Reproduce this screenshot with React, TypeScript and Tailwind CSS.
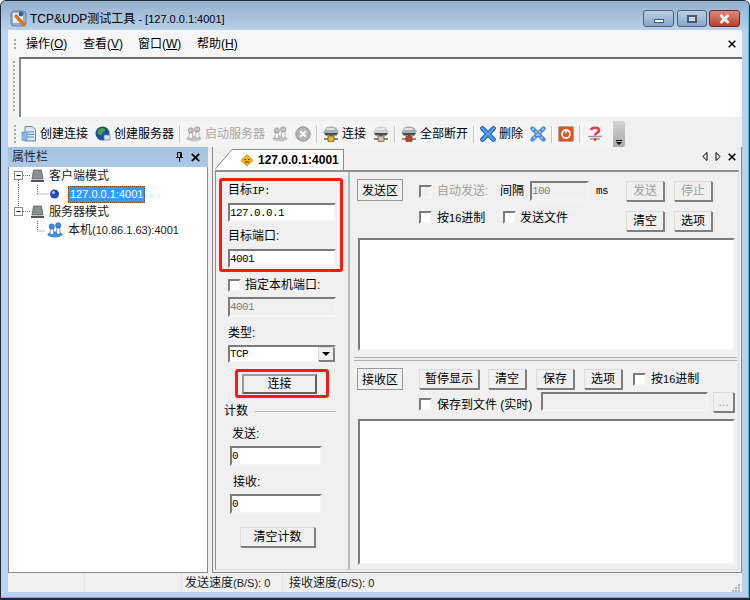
const MONO = "[font-family:'Liberation_Mono','Noto_Sans_CJK_SC',monospace] text-[11px] tracking-[-0.6px]";
const SUNKEN = "border-2 border-t-[#7b7b7b] border-l-[#7b7b7b] border-r-[#f4f4f4] border-b-[#f4f4f4]";
const BEVEL = "border border-t-[#dcdcdc] border-l-[#dcdcdc] border-r-[#7f7f7f] border-b-[#7f7f7f] shadow-[1px_1px_0_#7f7f7f]";

const Grip = ({ rows }: { rows: number }) => (
  <div className="flex w-[3px] shrink-0 flex-col gap-[2px]">
    {Array.from({ length: rows }).map((_, i) => (
      <div key={i} className="h-[2px] w-[2px] bg-[#a8a8a8]" />
    ))}
  </div>
);

const Check = ({ disabled }: { disabled?: boolean }) => (
  <div className={`h-[13px] w-[13px] shrink-0 ${SUNKEN} ${disabled ? "bg-[#f0f0f0]" : "bg-white"}`} />
);

const Btn = ({ label, w, disabled }: { label: string; w: string; disabled?: boolean }) => (
  <div
    className={`flex h-[20px] shrink-0 items-center justify-center ${w} ${BEVEL} ${
      disabled ? "text-[#a0a0a0]" : "text-black"
    }`}
  >
    {label}
  </div>
);

const Field = ({ value, w, h = "h-[20px]", disabled }: { value?: string; w: string; h?: string; disabled?: boolean }) => (
  <div
    className={`flex items-center overflow-hidden ${MONO} ${w} ${h} ${SUNKEN} ${
      disabled ? "bg-[#f0f0f0] text-[#808080]" : "bg-white text-black"
    }`}
  >
    {value}
  </div>
);

const Sep = () => <div className="mx-[5px] h-[17px] w-[2px] shrink-0 border-l border-r border-l-[#c4c4c4] border-r-white" />;

const Users = ({ color = "#3f8fe0", dark = "#1c5fb0" }: { color?: string; dark?: string }) => (
  <svg width="16" height="16" viewBox="0 0 16 16" className="shrink-0">
    <ellipse cx="8" cy="12.500" rx="7.500" ry="3" fill={color} />
    <circle cx="4.800" cy="4.500" r="2.600" fill={color} stroke={dark} strokeWidth="0.7" />
    <circle cx="11.200" cy="3.400" r="2.600" fill={color} stroke={dark} strokeWidth="0.7" />
    <path d="M3.300 7h3l.6 5.500H3zM9.800 6h3l.4 6h-3.800z" fill="#fff" stroke={dark} strokeWidth="0.6" />
  </svg>
);

const Server = ({ mid = "#e8b92c", tone = "#a9aeb5" }: { mid?: string; tone?: string }) => (
  <svg width="16" height="16" viewBox="0 0 16 16" className="shrink-0">
    <path d="M2 4c0-2.500 3-3.500 6-3.500S14 1.500 14 3l2 2.500-2 2.500H2L0 6z" fill={tone} />
    <path d="M3.500 3h8" stroke="#f2f3f5" strokeWidth="1.500" />
    <path d="M1 7h14l-1.500 2.500h-11z" fill="#4a4f57" />
    <path d="M8 9v3" stroke="#555" strokeWidth="2.400" />
    <path d="M1 13h14" stroke="#666" strokeWidth="1.500" />
    <rect x="5" y="10" width="6" height="5.500" fill={mid} stroke="#6b5210" strokeWidth="0.7" />
  </svg>
);

const BlueX = ({ size = 16 }: { size?: number }) => (
  <svg width={size} height={size} viewBox="0 0 16 16" className="shrink-0">
    <path d="M2.500 2.500 13.500 13.500M13.500 2.500 2.500 13.500" stroke="#27548f" strokeWidth="4.600" strokeLinecap="round" />
    <path d="M2.500 2.500 13.500 13.500M13.500 2.500 2.500 13.500" stroke="#4d9cf2" strokeWidth="3" strokeLinecap="round" />
  </svg>
);

const CloseGlyph = ({ size = 8 }: { size?: number }) => (
  <svg width={size} height={size} viewBox="0 0 8 8" className="shrink-0">
    <path d="M.7.7 7.300 7.300M7.300.7.700 7.300" stroke="#000" strokeWidth="1.500" />
  </svg>
);

const TitleBar = () => (
  <div className="flex h-[29px] shrink-0 items-start bg-gradient-to-b from-[#94afce] to-[#b9d1ea] pr-[8px] pl-[9px]">
    <svg width="18" height="18" viewBox="0 0 18 18" className="mt-[9px] shrink-0">
      <rect x="1" y="1" width="15" height="15" rx="3" fill="#8fb0d3" stroke="#4f6f94" strokeWidth="0.7" />
      <rect x="3" y="3" width="10" height="10" fill="#e9f0f8" />
      <path d="M6 6 14 15" stroke="#d9761d" strokeWidth="3.400" strokeLinecap="round" />
      <circle cx="11" cy="4" r="2.400" fill="#2f5f95" />
    </svg>
    <div className="mt-[9px] ml-[2px] text-[12px] leading-[18px] whitespace-nowrap text-black">
      TCP&amp;UDP测试工具<span className="text-[11px]"> - [127.0.0.1:4001]</span>
    </div>
    <div className="ml-auto flex pt-[9px]">
      <div className="flex h-[17px] w-[31px] items-end justify-center rounded-[3px] border border-[#51607a] bg-gradient-to-b from-[#bcd0e6] to-[#86a5c8] pb-[3px]">
        <div className="h-[4px] w-[10px] border border-[#4a5568] bg-white" />
      </div>
      <div className="ml-[3px] flex h-[17px] w-[30px] items-center justify-center rounded-[3px] border border-[#51607a] bg-gradient-to-b from-[#bcd0e6] to-[#86a5c8]">
        <div className="h-[8px] w-[10px] border-2 border-[#4a5568] bg-[#c8d6e6]" />
      </div>
      <div className="ml-[2px] flex h-[17px] w-[31px] items-center justify-center rounded-[3px] border border-[#6b2626] bg-gradient-to-b from-[#dd8c7e] to-[#b83f2d]">
        <svg width="11" height="10" viewBox="0 0 11 10">
          <path d="M1.500 1 9.500 9M9.500 1 1.500 9" stroke="#f4f4f4" strokeWidth="2.600" />
        </svg>
      </div>
    </div>
  </div>
);

const MenuBar = () => (
  <div className="flex h-[27px] shrink-0 items-center bg-[#f6f6f6] pr-[6px] pl-[6px] text-[12px]">
    <Grip rows={3} />
    <span className="ml-[9px] w-[57px]">操作(<u>O</u>)</span>
    <span className="w-[55px]">查看(<u>V</u>)</span>
    <span className="w-[59px]">窗口(<u>W</u>)</span>
    <span>帮助(<u>H</u>)</span>
    <div className="ml-auto">
      <CloseGlyph />
    </div>
  </div>
);

const Rebar = () => (
  <div className="flex h-[60px] shrink-0 bg-[#f4f4f4]">
    <div className="flex w-[11px] shrink-0 justify-center pt-[4px] pl-[1px]">
      <Grip rows={13} />
    </div>
    <div className="flex-1 border-t-2 border-l-2 border-t-[#6f6f6f] border-l-[#8a8a8a] bg-white" />
  </div>
);

const ToolBar = () => (
  <div className="flex h-[30px] shrink-0 items-end bg-[#f0f0f0]">
    <div className="flex h-[26px] w-[617px] items-center bg-[#f4f4f4] pl-[6px] text-[12px] text-black">
      <Grip rows={5} />
      <svg width="16" height="16" viewBox="0 0 16 16" className="ml-[4px] shrink-0">
        <path d="M4 .5h7.500l3 3V15H4z" fill="#dbe7f6" stroke="#5a8ac4" />
        <path d="M6 6h7M6 8.500h7M6 11h7" stroke="#5a8ac4" />
        <rect x="1" y="6" width="5" height="8.500" fill="#8fb6e2" stroke="#5a8ac4" strokeWidth="0.6" />
      </svg>
      <span className="ml-[3px] w-[52px] shrink-0">创建连接</span>
      <svg width="16" height="16" viewBox="0 0 16 16" className="ml-[3px] shrink-0">
        <circle cx="7.500" cy="7.500" r="7" fill="#1c4f9c" />
        <path d="M4 3c3-2 6-1 6 1s-3 2-3 4-3 1-4 0 0-3 1-5z" fill="#4ea23a" />
        <path d="M9 9h6v5H9z" fill="#d7e3f0" stroke="#5d7fa3" strokeWidth="0.7" />
      </svg>
      <span className="ml-[3px] w-[60px] shrink-0">创建服务器</span>
      <Sep />
      <Users color="#c3c3c3" dark="#8e8e8e" />
      <span className="ml-[3px] w-[60px] shrink-0 text-[#a6a6a6]">启动服务器</span>
      <div className="ml-[7px]">
        <Users color="#c3c3c3" dark="#8e8e8e" />
      </div>
      <svg width="16" height="16" viewBox="0 0 16 16" className="ml-[7px] shrink-0">
        <circle cx="8" cy="8" r="7.200" fill="#b4b4b4" stroke="#8e8e8e" />
        <path d="M5.300 5.300 10.700 10.700M10.700 5.300 5.300 10.700" stroke="#fff" strokeWidth="2" />
      </svg>
      <Sep />
      <Server />
      <span className="ml-[3px] w-[24px] shrink-0">连接</span>
      <div className="ml-[7px]">
        <Server mid="#c6c6c6" tone="#cfcfcf" />
      </div>
      <Sep />
      <Server mid="#c8392e" />
      <span className="ml-[3px] w-[48px] shrink-0">全部断开</span>
      <Sep />
      <BlueX />
      <span className="ml-[3px] w-[24px] shrink-0">删除</span>
      <div className="ml-[7px]">
        <svg width="16" height="16" viewBox="0 0 16 16" className="shrink-0">
          <path d="M2.500 2.500 13.500 13.500M13.500 2.500 2.500 13.500" stroke="#4d8bd8" strokeWidth="4.400" strokeLinecap="round" />
          <path d="M2.500 2.500 13.500 13.500M13.500 2.500 2.500 13.500" stroke="#c5d8ef" strokeWidth="1.400" strokeDasharray="2 2" />
        </svg>
      </div>
      <Sep />
      <svg width="16" height="16" viewBox="0 0 16 16" className="shrink-0">
        <rect x="0.500" y="0.500" width="15" height="15" rx="1" fill="#e0521f" stroke="#b8a38e" />
        <circle cx="8" cy="8" r="4" fill="none" stroke="#fff" strokeWidth="1.800" />
        <path d="M8 3.500v4" stroke="#fff" strokeWidth="1.600" />
      </svg>
      <Sep />
      <svg width="16" height="16" viewBox="0 0 16 16" className="ml-[1px] shrink-0">
        <path d="M1 10.500h14M3 13h10" stroke="#9a9a9a" strokeWidth="1.500" />
        <path d="M4 4c1-3 8-3 8 .5 0 2.500-4 2.500-4 5" fill="none" stroke="#e23c4c" strokeWidth="2.600" />
        <circle cx="8" cy="13.500" r="1.500" fill="#e23c4c" />
      </svg>
      <div className="ml-auto flex h-[26px] w-[12px] flex-col items-center justify-end rounded-r-[2px] bg-gradient-to-b from-[#d4d4d4] to-[#a8a8a8] pb-[2px]">
        <div className="mb-[1px] h-[1px] w-[6px] bg-black" />
        <div className="h-0 w-0 border-x-[3px] border-t-[3px] border-x-transparent border-t-black" />
      </div>
    </div>
  </div>
);

const Dotted = ({ d }: { d: string }) => <path d={d} stroke="#777" strokeDasharray="1 1" fill="none" />;

const Expander = () => (
  <>
    <rect x="5.500" y="4.500" width="8" height="8" fill="#fff" stroke="#888" />
    <path d="M7.500 8.500h4" stroke="#000" />
  </>
);

const Machine = () => (
  <>
    <path d="M24.500 3h8l1.500 9h-11z" fill="#8a8f96" stroke="#555" strokeWidth="0.7" />
    <path d="M22 13h13v2H22z" fill="#555" />
  </>
);

const TreeRow = ({ children, text }: { children: React.ReactNode; text: React.ReactNode }) => (
  <div className="flex h-[18px] items-center">
    <svg width="59" height="18" viewBox="0 0 59 18" className="shrink-0">
      {children}
    </svg>
    {text}
  </div>
);

const TreePanel = () => (
  <div className="flex w-[200px] shrink-0 flex-col">
    <div className="flex h-[20px] shrink-0 items-center bg-gradient-to-b from-[#a5c1e0] to-[#adc8e5] pr-[8px] pl-[4px] text-[12px] text-[#1c2a3a]">
      <span>属性栏</span>
      <svg width="9" height="10" viewBox="0 0 9 10" className="mr-[7px] ml-auto">
        <path d="M2.500.5h4v5h-4zM1 5.500h7M4.500 6v4M5.500 1v4" stroke="#000" fill="none" />
      </svg>
      <CloseGlyph size={9} />
    </div>
    <div className="flex-1 border-r border-b border-l border-r-[#8a8a8a] border-b-[#8a8a8a] border-l-[#8a8a8a] bg-white text-[12px] text-[#1a1a1a]">
      <TreeRow text={<span className="ml-[-19px]">客户端模式</span>}>
        <Dotted d="M9.500 13v5M14 8.500h7" />
        <Expander />
        <Machine />
      </TreeRow>
      <TreeRow
        text={
          <span className="border border-dotted border-[#6b4a1a] bg-[#3399ff] px-[1px] text-[11px] leading-[15px] text-white">
            127.0.0.1:4001
          </span>
        }
      >
        <Dotted d="M9.500 0v18M28.500 0v9M28.500 9h11" />
        <circle cx="45.500" cy="9" r="4.500" fill="#2449b8" />
        <circle cx="44.500" cy="7.500" r="1.600" fill="#9db4ee" />
      </TreeRow>
      <TreeRow text={<span className="ml-[-19px]">服务器模式</span>}>
        <Dotted d="M9.500 0v5M14 8.500h7" />
        <Expander />
        <Machine />
      </TreeRow>
      <TreeRow
        text={
          <span className="whitespace-nowrap">
            本机<span className="text-[11px]">(10.86.1.63):4001</span>
          </span>
        }
      >
        <Dotted d="M28.500 0v10M28.500 10h8" />
        <g transform="translate(38 1)">
          <Users />
        </g>
      </TreeRow>
    </div>
  </div>
);

const TabStrip = () => (
  <div className="flex h-[23px] shrink-0 items-end">
    <svg width="19" height="21" viewBox="0 0 19 21" className="ml-[2px] shrink-0">
      <path d="M0 20.500 17 1.500h2V21H0z" fill="#fff" />
      <path d="M0 20.500 17 .5h2" stroke="#8a8a8a" fill="none" />
    </svg>
    <div className="flex h-[21px] w-[110px] items-center border-t border-r border-t-[#8a8a8a] border-r-[#8a8a8a] bg-white">
      <svg width="14" height="14" viewBox="0 0 14 14" className="ml-[6px] shrink-0">
        <path d="M7 1.500 13 7.500 7 13 1 7.500z" fill="#f2b612" stroke="#a77c0a" strokeWidth="0.7" />
        <path d="M4.500 6.500h1.500M8 6.500h1.500M5 9h4" stroke="#333" strokeWidth="1.200" />
      </svg>
      <span className="ml-[4px] text-[12px] font-bold text-black">127.0.0.1:4001</span>
    </div>
    <div className="mt-[5px] ml-auto flex items-center gap-[7px] self-start pr-[5px]">
      <svg width="6" height="9" viewBox="0 0 6 9">
        <path d="M5 .5v8L.8 4.500z" fill="none" stroke="#000" />
      </svg>
      <svg width="6" height="9" viewBox="0 0 6 9">
        <path d="M1 .5v8l4.200-4z" fill="none" stroke="#000" />
      </svg>
      <CloseGlyph />
    </div>
  </div>
);

const ConnectForm = () => (
  <div className="flex w-[134px] shrink-0 flex-col border-r-2 border-r-[#b8b8b8] text-[12px] leading-[14px]">
    <div className="mt-[6px] ml-[3px] h-[94px] w-[124px] rounded-[3px] border-[3px] border-[#ff1a10] pt-[2px] pl-[6px]">
      <div>
        目标<span className={MONO}>IP:</span>
      </div>
      <div className="mt-[5px]">
        <Field value="127.0.0.1" w="w-[108px]" h="h-[19px]" />
      </div>
      <div className="mt-[7px]">目标端口:</div>
      <div className="mt-[6px]">
        <Field value="4001" w="w-[108px]" h="h-[19px]" />
      </div>
    </div>
    <div className="mt-[6px] ml-[12px] flex items-center">
      <Check />
      <span className="ml-[4px]">指定本机端口:</span>
    </div>
    <div className="mt-[5px] ml-[12px]">
      <Field value="4001" w="w-[108px]" disabled />
    </div>
    <div className="mt-[9px] ml-[12px]">类型:</div>
    <div className={`mt-[5px] ml-[12px] flex h-[18px] w-[108px] items-center justify-between bg-white ${SUNKEN}`}>
      <span className={MONO}>TCP</span>
      <div className={`flex h-[14px] w-[16px] items-center justify-center bg-[#f0f0f0] ${BEVEL}`}>
        <div className="h-0 w-0 border-x-[4px] border-t-[4px] border-x-transparent border-t-black" />
      </div>
    </div>
    <div className="mt-[6px] ml-[19px] flex h-[29px] w-[94px] items-center rounded-[3px] border-[3px] border-[#ff1a10] pl-[4px]">
      <div className="flex h-[20px] w-[75px] items-center justify-center border-2 border-t-[#9a9a9a] border-r-[#5f5f5f] border-b-[#5f5f5f] border-l-[#9a9a9a]">
        连接
      </div>
    </div>
    <div className="mt-[6px] ml-[8px] flex items-center">
      <span>计数</span>
      <div className="ml-[7px] h-[1px] w-[81px] bg-[#b4b4b4]" />
    </div>
    <div className="mt-[9px] ml-[16px]">发送:</div>
    <div className="mt-[5px] ml-[14px]">
      <Field value="0" w="w-[92px]" />
    </div>
    <div className="mt-[9px] ml-[17px]">接收:</div>
    <div className="mt-[5px] ml-[14px]">
      <Field value="0" w="w-[92px]" />
    </div>
    <div className="mt-[13px] ml-[24px]">
      <Btn label="清空计数" w="w-[75px]" />
    </div>
  </div>
);

const ZoneLabel = ({ label }: { label: string }) => (
  <div className="flex h-[22px] w-[46px] shrink-0 items-center justify-center border border-[#9a9a9a] pt-[1px]">{label}</div>
);

const TextArea = ({ h }: { h: string }) => <div className={`ml-[8px] w-[377px] shrink-0 bg-white ${h} ${SUNKEN}`} />;

const DataPanels = () => (
  <div className="flex-1 text-[12px] leading-[14px]">
    <div className="mt-[7px] ml-[7px] flex">
      <ZoneLabel label="发送区" />
      <div className="ml-[16px] flex flex-col pt-[2px]">
        <div className="flex h-[20px] items-center">
          <Check disabled />
          <span className="ml-[5px] w-[63px] shrink-0 whitespace-nowrap text-[#a0a0a0]">自动发送:</span>
          <span className="w-[30px] shrink-0">间隔</span>
          <Field value="100" w="w-[59px]" disabled />
          <span className={`ml-[7px] w-[30px] shrink-0 ${MONO}`}>ms</span>
          <Btn label="发送" w="w-[38px]" disabled />
          <div className="ml-[10px]">
            <Btn label="停止" w="w-[38px]" disabled />
          </div>
        </div>
        <div className="mt-[10px] flex h-[20px] items-start">
          <div className="flex h-[13px] items-center">
            <Check />
            <span className="ml-[5px] w-[66px] shrink-0">
              按<span className="text-[11px]">16</span>进制
            </span>
            <Check />
            <span className="ml-[4px] w-[106px] shrink-0">发送文件</span>
          </div>
          <Btn label="清空" w="w-[38px]" />
          <div className="ml-[10px]">
            <Btn label="选项" w="w-[38px]" />
          </div>
        </div>
      </div>
    </div>
    <div className="mt-[7px]">
      <TextArea h="h-[113px]" />
    </div>
    <div className="mt-[6px] ml-[4px] h-[4px] w-[383px] border-t border-b border-t-[#b0b0b0] border-b-[#b0b0b0]" />
    <div className="mt-[7px] ml-[7px] flex">
      <ZoneLabel label="接收区" />
      <div className="ml-[16px] flex flex-col pt-[1px]">
        <div className="flex h-[20px] items-center">
          <Btn label="暂停显示" w="w-[60px]" />
          <div className="ml-[9px]">
            <Btn label="清空" w="w-[38px]" />
          </div>
          <div className="ml-[10px]">
            <Btn label="保存" w="w-[38px]" />
          </div>
          <div className="ml-[10px]">
            <Btn label="选项" w="w-[38px]" />
          </div>
          <div className="ml-[11px]">
            <Check />
          </div>
          <span className="ml-[5px]">
            按<span className="text-[11px]">16</span>进制
          </span>
        </div>
        <div className="mt-[3px] flex h-[20px] items-start">
          <div className="mt-[6px] flex h-[13px] items-center">
            <Check />
            <span className="ml-[5px] w-[104px] shrink-0 whitespace-nowrap">保存到文件 (实时)</span>
          </div>
          <Field w="w-[167px]" h="h-[19px]" disabled />
          <div className="ml-[5px]">
            <Btn label="..." w="w-[21px]" disabled />
          </div>
        </div>
      </div>
    </div>
    <div className="mt-[7px]">
      <TextArea h="h-[146px]" />
    </div>
  </div>
);

const TabPanel = () => (
  <div className="ml-[4px] flex flex-1 flex-col border-r border-b border-l border-r-[#8a8a8a] border-b-[#8a8a8a] border-l-[#8a8a8a] bg-[#f0f0f0]">
    <TabStrip />
    <div className="mr-[2px] ml-[2px] mb-[2px] flex flex-1 border-t-2 border-r border-b border-l border-t-[#8f8f8f] border-r-[#dcdcdc] border-b-[#dcdcdc] border-l-[#8f8f8f]">
      <ConnectForm />
      <DataPanels />
    </div>
  </div>
);

const StatusBar = () => (
  <div className="relative flex h-[20px] shrink-0 items-center bg-[#f0f0f0] text-[12px] text-[#1a1a1a]">
    <div className="h-full w-[77px] border-r border-r-[#e4e4e4]" />
    <div className="h-full w-[97px] border-r border-r-[#e4e4e4]" />
    <div className="flex h-full w-[101px] items-center border-r border-r-[#e4e4e4] pl-[3px] whitespace-nowrap">
      发送速度<span className="text-[11px]">(B/S): 0</span>
    </div>
    <div className="pl-[6px] whitespace-nowrap">
      接收速度<span className="text-[11px]">(B/S): 0</span>
    </div>
    <svg width="8" height="8" viewBox="0 0 8 8" className="absolute right-[2px] bottom-[1px]">
      <path d="M6 0h2v2H6zM3 3h2v2H3zM6 3h2v2H6zM0 6h2v2H0zM3 6h2v2H3zM6 6h2v2H6z" fill="#b0b0b0" />
    </svg>
  </div>
);

export default function App() {
  return (
    <div className="h-[600px] w-[750px] overflow-hidden rounded-t-[6px] border-t border-r border-b-2 border-l border-t-[#1c2b38] border-r-[#1c2b38] border-b-[#1c2b38] border-l-[#1c2b38] bg-[#b9d1ea] [font-family:'Liberation_Sans','Noto_Sans_CJK_SC',sans-serif]">
      <div className="flex h-full flex-col border-r border-b border-r-[#39c6e0] border-b-[#39c6e0]">
        <TitleBar />
        <div className="mr-[6px] mb-[5px] ml-[7px] flex flex-1 flex-col overflow-hidden bg-[#f0f0f0]">
          <MenuBar />
          <Rebar />
          <ToolBar />
          <div className="flex h-[426px] shrink-0">
            <TreePanel />
            <TabPanel />
          </div>
          <StatusBar />
        </div>
      </div>
    </div>
  );
}
